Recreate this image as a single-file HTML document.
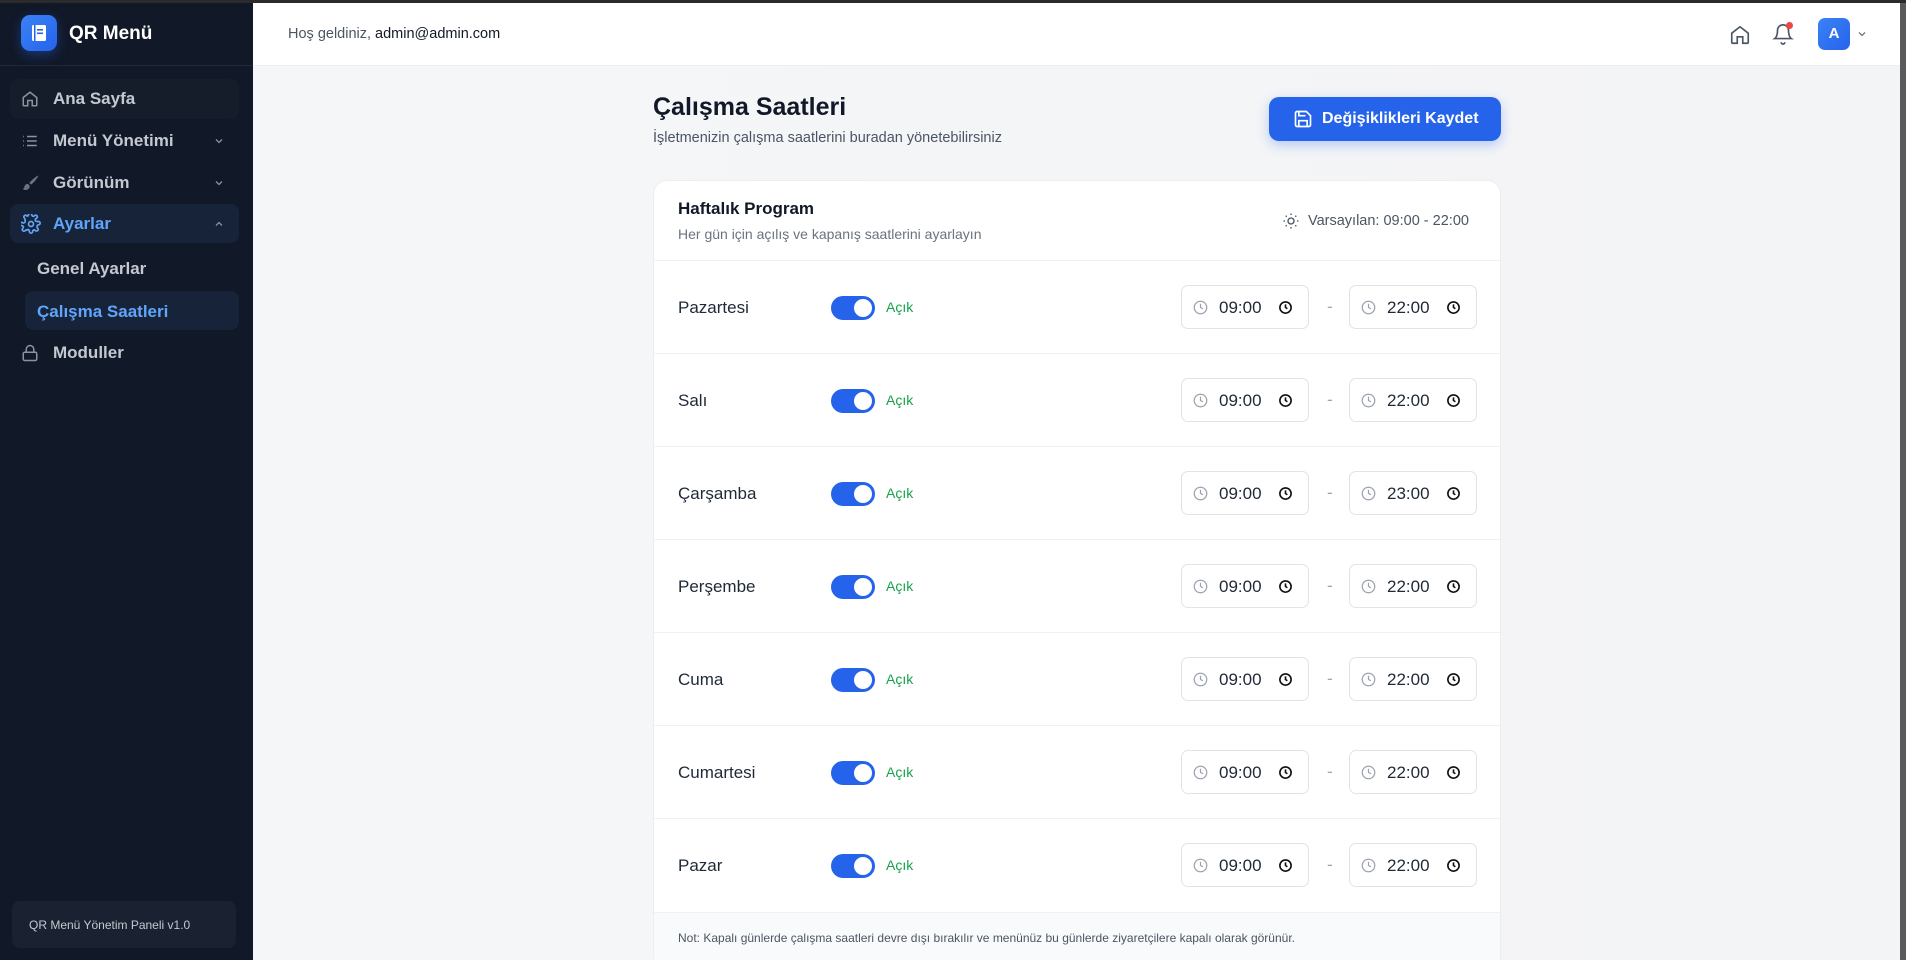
<!DOCTYPE html>
<html><head><meta charset="utf-8"><style>
*{box-sizing:border-box;margin:0;padding:0}
html{width:1906px;height:960px;overflow:hidden}
body{width:1906px;height:960px;overflow:hidden;font-family:"Liberation Sans",sans-serif;background:#f3f4f6;position:relative}
.sb{position:absolute;left:0;top:3px;width:253px;height:957px;background:#111827}
.topline{position:absolute;left:0;top:0;width:1906px;height:3px;background:#2b2b2b}
.scroll{position:absolute;right:0;top:3px;width:6px;height:957px;background:#5a5a5a}
.nav{position:absolute;left:0;width:253px;height:40px;display:flex;align-items:center;color:#c4c8d0;font-size:17px;font-weight:bold}
.nav svg{position:absolute;left:21px}
.nav span{position:absolute;left:53px}
.nav .chev{left:213px}
.main{position:absolute;left:253px;top:3px;right:6px;bottom:0;background:linear-gradient(90deg,#f5f6f8,#f3f4f6)}
.top{position:absolute;left:0;top:0;right:0;height:63px;background:#fff;border-bottom:1px solid #eceef1}
.card{position:absolute;left:653px;top:180px;width:848px;height:790px;background:#fff;border:1px solid #eceef1;border-radius:14px;overflow:hidden}
.row{position:absolute;left:0;width:848px;height:93px;border-top:1px solid #f0f1f3}
.day{position:absolute;left:24px;top:37px;font-size:17px;color:#1f2937}
.tg{position:absolute;left:177px;top:35px;width:44px;height:24px;border-radius:12px;background:#2563eb}
.tg:after{content:"";position:absolute;right:3px;top:3px;width:18px;height:18px;border-radius:50%;background:#fff}
.ac{position:absolute;left:232px;top:38px;font-size:14px;color:#16a34a}
.ti{position:absolute;top:24px;width:128px;height:44px;border:1px solid #e0e3e7;border-radius:7px;font-size:17px;color:#1f2937}
.ti .c1{position:absolute;left:11px;top:14px}
.ti b{position:absolute;left:37px;top:12px;font-weight:normal}
.ti .c2{position:absolute;left:96px;top:14px}
.dash{position:absolute;left:673px;top:36px;color:#9ca3af;font-size:17px}
</style></head><body>
<div class="topline"></div>
<div class="sb">
 <div style="position:absolute;left:21px;top:12px;width:36px;height:36px;border-radius:9px;background:linear-gradient(135deg,#3b82f6,#2563eb);box-shadow:0 4px 12px rgba(37,99,235,.4)">
  <svg width="36" height="36" viewBox="0 0 36 36"><rect x="11" y="10" width="14" height="16" rx="1.5" fill="#fff"/><rect x="13" y="10" width="1.5" height="16" fill="#2563eb"/><rect x="16" y="14" width="6" height="1.6" fill="#2563eb"/><rect x="16" y="17.5" width="6" height="1.6" fill="#2563eb"/></svg>
 </div>
 <div style="position:absolute;left:69px;top:20px;color:#fff;font-size:19px;font-weight:bold">QR Menü</div>
 <div style="position:absolute;left:0;top:62px;width:253px;height:1px;background:#1f2a3a"></div>
 <div style="position:absolute;left:10px;top:76px;width:229px;height:40px;border-radius:8px;background:#151d2b"></div>
 <div class="nav" style="top:76px"><svg width="18" height="18" viewBox="0 0 24 24" fill="none" stroke="#8b93a1" stroke-width="2"><path d="M3 10l9-7 9 7v10a1 1 0 0 1-1 1h-5v-7H9v7H4a1 1 0 0 1-1-1z"/></svg><span>Ana Sayfa</span></div>
 <div class="nav" style="top:118px"><svg width="18" height="18" viewBox="0 0 24 24" fill="none" stroke="#8b93a1" stroke-width="2"><path d="M8 6h13M8 12h13M8 18h13M3 6h1M3 12h1M3 18h1"/></svg><span>Menü Yönetimi</span><svg class="chev" width="12" height="12" viewBox="0 0 24 24" fill="none" stroke="#8b93a1" stroke-width="2.5"><path d="M6 9l6 6 6-6"/></svg></div>
 <div class="nav" style="top:160px"><svg width="20" height="20" viewBox="0 0 24 24" fill="#6b7280"><path d="M21 3c-3 1-9 6-11 9l2 2c3-2 8-8 9-11zM8 13c-2 0-4 2-4 4 0 1-1 2-2 2 2 2 6 2 8-1 1-2 0-4-2-5z"/></svg><span>Görünüm</span><svg class="chev" width="12" height="12" viewBox="0 0 24 24" fill="none" stroke="#8b93a1" stroke-width="2.5"><path d="M6 9l6 6 6-6"/></svg></div>
 <div style="position:absolute;left:10px;top:201px;width:229px;height:39px;border-radius:8px;background:#172338"></div>
 <div class="nav" style="top:201px;color:#60a5fa"><svg width="20" height="20" viewBox="0 0 24 24" fill="none" stroke="#60a5fa" stroke-width="2"><circle cx="12" cy="12" r="3"/><path d="M19.4 15a1.7 1.7 0 0 0 .3 1.8l.1.1a2 2 0 1 1-2.8 2.8l-.1-.1a1.7 1.7 0 0 0-2.9 1.2V21a2 2 0 1 1-4 0v-.1A1.7 1.7 0 0 0 7 19.4a1.7 1.7 0 0 0-1.8.3l-.1.1a2 2 0 1 1-2.8-2.8l.1-.1A1.7 1.7 0 0 0 1.2 14H1a2 2 0 1 1 0-4h.1A1.7 1.7 0 0 0 4.6 7a1.7 1.7 0 0 0-.3-1.8l-.1-.1a2 2 0 1 1 2.8-2.8l.1.1A1.7 1.7 0 0 0 9 1.2V1a2 2 0 1 1 4 0v.1a1.7 1.7 0 0 0 2.9 1.2l.1-.1a2 2 0 1 1 2.8 2.8l-.1.1A1.7 1.7 0 0 0 19.4 9H21a2 2 0 1 1 0 4h-.1a1.7 1.7 0 0 0-1.5 2z"/></svg><span>Ayarlar</span><svg class="chev" width="12" height="12" viewBox="0 0 24 24" fill="none" stroke="#8b93a1" stroke-width="2.5"><path d="M6 15l6-6 6 6"/></svg></div>
 <div class="nav" style="top:246px"><span style="left:37px">Genel Ayarlar</span></div>
 <div style="position:absolute;left:25px;top:288px;width:214px;height:39px;border-radius:8px;background:#172338"></div>
 <div class="nav" style="top:289px;color:#60a5fa"><span style="left:37px">Çalışma Saatleri</span></div>
 <div class="nav" style="top:330px"><svg width="18" height="18" viewBox="0 0 24 24" fill="none" stroke="#8b93a1" stroke-width="2"><rect x="3" y="11" width="18" height="11" rx="2"/><path d="M7 11V7a5 5 0 0 1 10 0v4"/></svg><span>Moduller</span></div>
 <div style="position:absolute;left:12px;top:898px;width:224px;height:47px;border-radius:8px;background:#1a2232;color:#c4c8d0;font-size:12px;padding:17px 0 0 17px">QR Menü Yönetim Paneli v1.0</div>
</div>
<div class="main">
 <div class="top">
  <div style="position:absolute;left:35px;top:23px;font-size:14.5px;color:#4b5563">Hoş geldiniz, <span style="color:#111827">admin@admin.com</span></div>
  <svg style="position:absolute;left:1476px;top:21px" width="22" height="22" viewBox="0 0 24 24" fill="none" stroke="#4b5563" stroke-width="1.8"><path d="M3 10l9-7 9 7v10a1 1 0 0 1-1 1h-5v-7H9v7H4a1 1 0 0 1-1-1z"/></svg>
  <svg style="position:absolute;left:1519px;top:20px" width="22" height="22" viewBox="0 0 24 24" fill="none" stroke="#4b5563" stroke-width="1.8"><path d="M6 8a6 6 0 0 1 12 0c0 7 3 9 3 9H3s3-2 3-9M10 21a2 2 0 0 0 4 0"/></svg>
  <div style="position:absolute;left:1533px;top:19px;width:7px;height:7px;border-radius:50%;background:#ef4444"></div>
  <div style="position:absolute;left:1565px;top:15px;width:32px;height:32px;border-radius:7px;background:linear-gradient(135deg,#3b82f6,#2563eb);color:#fff;font-weight:bold;font-size:15px;text-align:center;line-height:32px">A</div>
  <svg style="position:absolute;left:1603px;top:25px" width="12" height="12" viewBox="0 0 24 24" fill="none" stroke="#6b7280" stroke-width="2.5"><path d="M6 9l6 6 6-6"/></svg>
 </div>
</div>
<div style="position:absolute;left:653px;top:93px;font-size:25px;font-weight:bold;color:#111827">Çalışma Saatleri</div>
<div style="position:absolute;left:653px;top:130px;font-size:14.5px;color:#4b5563">İşletmenizin çalışma saatlerini buradan yönetebilirsiniz</div>
<div style="position:absolute;left:1269px;top:97px;width:232px;height:44px;border-radius:10px;background:#2563eb;box-shadow:0 4px 12px rgba(37,99,235,.3);color:#fff;font-weight:bold;font-size:16px">
 <svg style="position:absolute;left:24px;top:12px" width="20" height="20" viewBox="0 0 24 24" fill="none" stroke="#fff" stroke-width="2"><path d="M5 3h11l5 5v11a2 2 0 0 1-2 2H5a2 2 0 0 1-2-2V5a2 2 0 0 1 2-2z"/><path d="M7 3v5h8M7 21v-7h10v7"/></svg>
 <span style="position:absolute;left:53px;top:13px">Değişiklikleri Kaydet</span></div>
<div class="card">
 <div style="position:absolute;left:24px;top:18px;font-size:17px;font-weight:bold;color:#111827">Haftalık Program</div>
 <div style="position:absolute;left:24px;top:45px;font-size:14px;color:#6b7280">Her gün için açılış ve kapanış saatlerini ayarlayın</div>
 <svg style="position:absolute;left:628px;top:31px" width="18" height="18" viewBox="0 0 24 24" fill="none" stroke="#4b5563" stroke-width="1.8"><circle cx="12" cy="12" r="4"/><path d="M12 2v2M12 20v2M4.9 4.9l1.4 1.4M17.7 17.7l1.4 1.4M2 12h2M20 12h2M4.9 19.1l1.4-1.4M17.7 6.3l1.4-1.4"/></svg>
 <div style="position:absolute;left:654px;top:32px;font-size:14.5px;color:#4b5563">Varsayılan: 09:00 - 22:00</div>
 <div id="rows"></div>
 <div style="position:absolute;left:0;top:731px;width:848px;height:80px;background:#f9fafb;border-top:1px solid #f0f1f3"></div>
 <div style="position:absolute;left:24px;top:750px;font-size:12px;color:#4b5563">Not: Kapalı günlerde çalışma saatleri devre dışı bırakılır ve menünüz bu günlerde ziyaretçilere kapalı olarak görünür.</div>
</div>
<div class="scroll"></div>
<script>
var d=[["Pazartesi","22:00"],["Salı","22:00"],["Çarşamba","23:00"],["Perşembe","22:00"],["Cuma","22:00"],["Cumartesi","22:00"],["Pazar","22:00"]];
var c1='<svg class="c1" width="15" height="15" viewBox="0 0 24 24" fill="none" stroke="#9ca3af" stroke-width="2"><circle cx="12" cy="12" r="10"/><path d="M12 6v6l4 2"/></svg>';
var c2='<svg class="c2" width="15" height="15" viewBox="0 0 24 24" fill="none" stroke="#111" stroke-width="2.6"><circle cx="12" cy="12" r="9"/><path d="M12 7v5l3 2"/></svg>';
var h='';d.forEach(function(r,i){var t=79+i*93;
h+='<div class="row" style="top:'+t+'px"><div class="day">'+r[0]+'</div><div class="tg"></div><div class="ac">Açık</div><div class="ti" style="left:527px">'+c1+'<b>09:00</b>'+c2+'</div><div class="dash">-</div><div class="ti" style="left:695px">'+c1+'<b>'+r[1]+'</b>'+c2+'</div></div>';});
document.getElementById('rows').innerHTML=h;
</script>
</body></html>
